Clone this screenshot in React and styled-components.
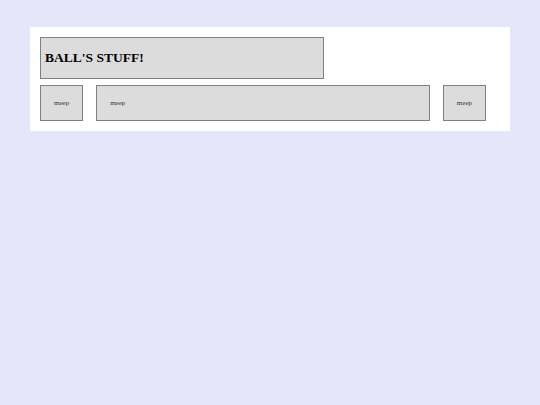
import styled, { createGlobalStyle } from "styled-components";

const GlobalStyle = createGlobalStyle`
  body {
    margin: 0;
    background: lavender;
    font-family: "Liberation Serif", "Times New Roman", serif;
  }
`;

const Panel = styled.div`
  margin: 27px 30px;
  padding: 10px;
  background: #fff;
  display: flex;
  flex-direction: column;
  gap: 6px;
`;

const Header = styled.div`
  width: 278px;
  height: 40px;
  display: flex;
  align-items: center;
  padding-left: 4px;
  background: gainsboro;
  border: 1px solid gray;
  h1 {
    margin: 0;
    font-size: 13.5px;
    font-weight: bold;
    color: #000;
  }
`;

const Row = styled.div`
  display: flex;
  gap: 13px;
  padding-right: 14px;
`;

const Box = styled.div`
  flex: ${({ $grow }) => ($grow ? 1 : "none")};
  height: 34px;
  display: flex;
  align-items: center;
  justify-content: ${({ $grow }) => ($grow ? "flex-start" : "center")};
  padding: 0 13px;
  background: gainsboro;
  border: 1px solid gray;
  font-size: 7px;
  color: #333;
`;

export default function App() {
  return (
    <>
      <GlobalStyle />
      <Panel>
        <Header>
          <h1>BALL'S STUFF!</h1>
        </Header>
        <Row>
          <Box>meep</Box>
          <Box $grow>meep</Box>
          <Box>meep</Box>
        </Row>
      </Panel>
    </>
  );
}
